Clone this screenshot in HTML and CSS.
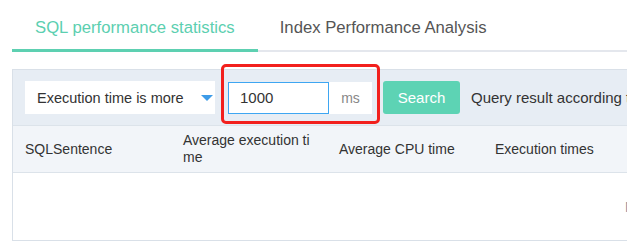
FILE: index.html
```html
<!DOCTYPE html>
<html>
<head>
<meta charset="utf-8">
<link rel="stylesheet" href="styles.css">
</head>
<body>
<div class="page">
  <div class="tabs">
    <div class="tab active">SQL performance statistics</div>
    <div class="tab">Index Performance Analysis</div>
  </div>
  <div class="panel">
    <div class="toolbar">
      <div class="select">
        <span class="select-text">Execution time is more</span>
        <span class="caret"></span>
      </div>
      <div class="input-group highlight">
        <div class="input">1000</div>
        <div class="addon">ms</div>
      </div>
      <button class="btn">Search</button>
      <span class="hint">Query result according to the execution time condition</span>
    </div>
    <div class="table">
      <div class="thead">
        <div class="th th-first">SQLSentence</div>
        <div class="th">Average execution time</div>
        <div class="th">Average CPU time</div>
        <div class="th">Execution times</div>
      </div>
      <div class="tbody">
        <span class="empty">No data</span>
      </div>
    </div>
  </div>
</div>
</body>
</html>
```
FILE: styles.css
```css
html, body {
  margin: 0;
  padding: 0;
  background: #fff;
  overflow: hidden;
}
body {
  width: 627px;
  height: 250px;
  font-family: "Liberation Sans", Arial, sans-serif;
  font-size: 14px;
  color: #333;
}
.page {
  padding: 0 0 0 12px;
  width: 900px;
}
.tabs {
  display: flex;
  border-bottom: 2px solid #e4e7ed;
  width: 615px;
}
.tab {
  padding: 16px 23px 9px 23px;
  line-height: 24px;
  font-size: 16.7px;
  color: #555;
  border-bottom: 3px solid transparent;
  margin-bottom: -2px;
  white-space: nowrap;
}
.tab + .tab {
  padding-left: 22px;
}
.tab.active {
  color: #5ccfb0;
  border-bottom-color: #5dd0b1;
}
.panel {
  margin-top: 17px;
  border: 1px solid #d9e0e8;
  width: 800px;
}
.toolbar {
  background: #e7edf4;
  padding: 11px 12px 11px 12px;
  display: flex;
  align-items: center;
  white-space: nowrap;
}
.toolbar > * {
  flex-shrink: 0;
}
.select {
  width: 190px;
  height: 33px;
  background: #fff;
  display: flex;
  align-items: center;
  justify-content: space-between;
  padding: 0 2px 0 12px;
  box-sizing: border-box;
  font-size: 14.5px;
}
.caret {
  width: 0;
  height: 0;
  border-left: 6px solid transparent;
  border-right: 6px solid transparent;
  border-top: 6px solid #3d9be8;
}
.input-group {
  display: flex;
  margin-left: 13px;
  height: 32px;
  position: relative;
}
.highlight::after {
  content: "";
  position: absolute;
  left: -7px;
  top: -18px;
  width: 159px;
  height: 60px;
  border: 3px solid #f2201d;
  border-radius: 5px;
  box-sizing: border-box;
}
.input {
  width: 101px;
  box-sizing: border-box;
  border: 1px solid #3ea6f2;
  background: #fff;
  padding-left: 11px;
  line-height: 30px;
  font-size: 15px;
  color: #333;
}
.addon {
  width: 43px;
  background: #fff;
  color: #888;
  text-align: center;
  line-height: 32px;
  font-size: 14px;
}
.btn {
  margin-left: 11px;
  width: 77px;
  height: 33px;
  border: 0;
  border-radius: 3px;
  background: #5dd3b4;
  color: #fff;
  font-family: inherit;
  font-size: 15px;
  padding: 0;
}
.hint {
  margin-left: 11px;
  font-size: 15px;
  color: #333;
}
.thead {
  display: flex;
  background: #f2f5f9;
  border-top: 1px solid #dce3ea;
  border-bottom: 1px solid #dce3ea;
  height: 46px;
  align-items: center;
}
.th {
  width: 156px;
  box-sizing: border-box;
  padding: 0 12px;
  line-height: 17px;
  word-break: break-all;
}
.th-first {
  width: 158px;
}
.tbody {
  height: 67px;
  display: flex;
  align-items: center;
  padding-left: 612px;
  color: #8a8fa0;
  white-space: nowrap;
}
```
